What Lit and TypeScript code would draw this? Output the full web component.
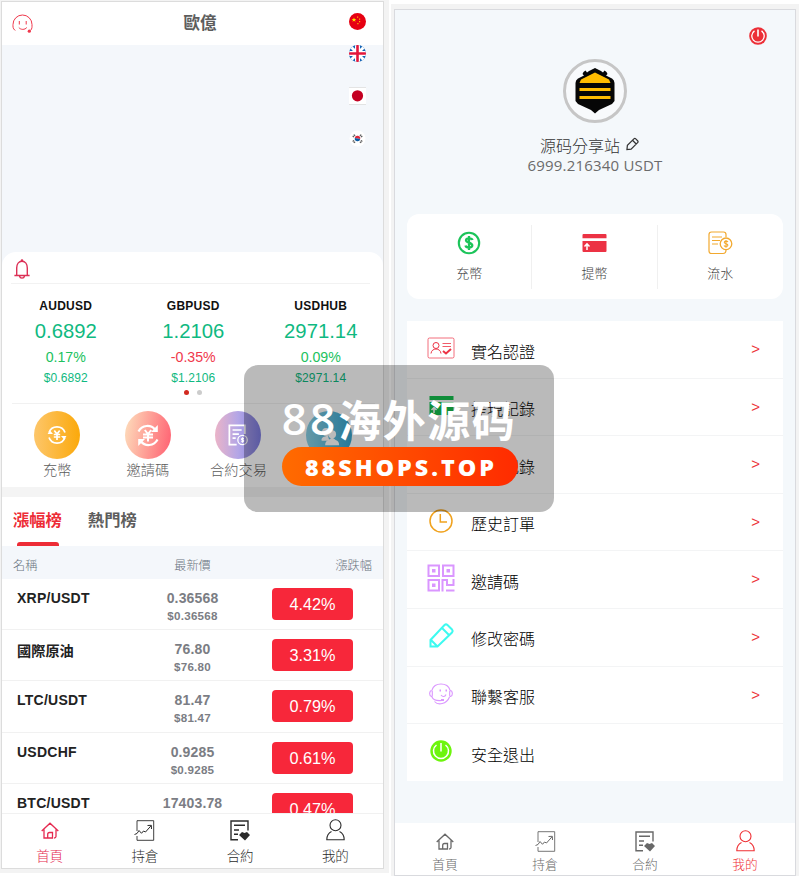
import { LitElement, html, svg, css, nothing } from "lit";
import { customElement, property } from "lit/decorators.js";
import { classMap } from "lit/directives/class-map.js";

const ic = (w: number, h: number, box: string, body: unknown) =>
  html`<svg width=${w} height=${h} viewBox=${box} fill="none" stroke="currentColor" stroke-width="1.3">${body}</svg>`;

const icons: Record<string, () => unknown> = {
  smile: () => ic(22, 20, "0 0 22 20", svg`
    <path d="M3.200 16.500C.5 14.500 1 12 1 10.500A9.500 9.500 0 0 1 20 10.500C20 13 20.300 14.500 18.500 16.500" stroke-width="1"/>
    <path d="M7.300 7v3.500M14.200 7v3.500M6.800 13.500c2 2.500 6 2.500 8 0" stroke-width="1"/>
    <circle cx="17.300" cy="17.200" r="1.600" fill="currentColor" stroke="none"/>`),
  bell: () => ic(16, 20, "0 0 16 20", svg`
    <path d="M2.700 16V9C2.700 5 4.800 2.200 8 2.200S13.300 5 13.300 9V16M.4 16.500H15.600M5.500 17.200C6 19.800 10 19.800 10.500 17.200" stroke-width="1.400"/>
    <circle cx="8" cy="1.500" r="1.300" fill="currentColor" stroke="none"/>`),
  home: () => ic(18, 17, "0 0 18 17", svg`
    <path d="M.7 9L9 1.200L17.300 9M3 7.500V16H11.500V10.500H8.500Q6.700 10.500 6.700 12.500V16M15 7.500V14.500Q15 16 13 16" stroke-width="1.300"/>`),
  chart: () => ic(21, 21, "0 0 21 21", svg`
    <path d="M3 11V.7H19.700V20.300H3V16" stroke-width=".9"/>
    <path d="M.5 14.500L3 13.500L5 10.500L7.500 13.300L9.500 11L11.500 12L17 5.800M13.500 5.500L17.300 5.300L17.500 9" stroke-width="1"/>`),
  contract: () => ic(20, 21, "0 0 20 21", svg`
    <path d="M8 19.700H1V1H18V10.500" stroke-width="1.400"/>
    <path d="M4 5.300H15M4 10H9M4 14.300H8" stroke-width="1.400"/>
    <path d="M9 15L12 12L14.500 13L17 12L20 15L15 20.500Z" fill="currentColor" stroke="none"/>`),
  user: () => ic(19, 22, "0 0 19 22", svg`
    <circle cx="9.500" cy="6.300" r="5.500" stroke-width="1.100"/>
    <path d="M5.500 12.500C2.500 14 .8 16.500.8 20.700H18.200C18.200 16.500 16.500 14 13.500 12.500" stroke-width="1.100"/>`),
  power: () => ic(22, 22, "0 0 22 22", svg`
    <circle cx="11" cy="11" r="10.700" fill="currentColor" stroke="none"/>
    <path d="M6.500 5A7.500 7.500 0 1 0 15.500 5M11 3V11.500" stroke="#fff" stroke-width="1.500"/>`),
  powerRed: () => ic(18, 18, "0 0 18 18", svg`
    <circle cx="9" cy="9" r="8.800" fill="currentColor" stroke="none"/>
    <path d="M5.500 3.900A6.200 6.200 0 1 0 12.500 3.900" stroke="#fff" stroke-width="1.300"/>
    <path d="M9 2.500V9.500" stroke="#fff" stroke-width="1.600"/>`),
  edit: () => ic(13, 14, "0 0 14 14", svg`
    <path d="M1 13L1.500 8.500L8.500 1.500Q9.500.5 10.500 1.500L12.500 3.500Q13.500 4.500 12.500 5.500L5.500 12.500ZM7 3L11 7" stroke-width="1.300"/>`),
  dollar: () => ic(24, 24, "0 0 24 24", svg`
    <circle cx="12" cy="12" r="10.200" stroke-width="2.100"/>
    <path d="M15.500 9C15 7 9 6.500 9 9.300C9 12 15.300 11.300 15.300 14.500C15.300 17.500 9 17 8.500 14.500M12 5V19" stroke-width="2.300"/>`),
  card: () => ic(25, 20, "0 0 25 20", svg`
    <path d="M.5 2Q.5 1 1.500 1H23.500Q24.500 1 24.500 2V5.300H.5ZM.5 8H24.500V18Q24.500 19 23.500 19H1.500Q.5 19 .5 18Z" fill="currentColor" stroke="none"/>
    <path d="M5 17V11.500M2.500 13.500L5 10.800L7.500 13.500" stroke="#fff" stroke-width="1.500"/>`),
  cardGreen: () => ic(25, 20, "0 0 25 20", svg`
    <path d="M.5 0H24.500V4H.5ZM.5 6H24.500V19H.5Z" fill="currentColor" stroke="none"/>
    <path d="M5 12V17M2.500 14L5 11.500L7.500 14" stroke="#fff" stroke-width="1.500"/>`),
  flow: () => ic(25, 24, "0 0 25 24", svg`
    <path d="M18 6V3.500Q18 1 15.500 1H3.500Q1 1 1 3.500V20Q1 22.500 3.500 22.500H15Q18 22.500 18 19M4 6H14M4 9.500H12M4 13H10" stroke-width="1.200"/>
    <circle cx="18" cy="12.800" r="5.800"/><path d="M20 11C19 9.500 16 10 16.300 11.500C16.500 13 20 12.400 19.900 14.200C19.700 16 16.500 15.500 16 14.500M18 9V16.800" stroke-width="1.100"/>`),
  idcard: () => ic(28, 22, "0 0 28 22", svg`
    <rect x="1" y="1" width="26" height="20" rx="1.500" stroke-width="1" opacity=".7"/>
    <circle cx="9" cy="8.500" r="3" stroke-width="1"/><path d="M4 16.500C4.500 10.500 13.500 10.500 14 16.500" stroke-width="1"/>
    <path d="M15.500 6.500H24M15.500 9.500H24" stroke-width=".8"/><path d="M16 14L19 16.500L24 12" stroke-width="2"/>`),
  clock: () => ic(24, 24, "0 0 24 24", svg`<circle cx="12" cy="12" r="11" stroke-width="1.500"/><path d="M11.300 5V13H18" stroke-width="1.500"/>`),
  qr: () => ic(28, 28, "0 0 28 28", svg`
    <path d="M1.500 1.500H12V12H1.500ZM16 1.500H26.500V12H16ZM1.500 16H12V26.500H1.500ZM15.500 27.500V16H20V21H26.500V15M19 26.500H27.500" stroke-width="2"/>
    <path d="M5 5H8.500V8.500H5ZM19.500 5H23V8.500H19.500ZM5 19.500H8.500V23H5Z" fill="currentColor" stroke="none"/>`),
  pencil: () => ic(25, 25, "0 0 25 25", svg`
    <path d="M1.500 23.500V17L15.500 2Q17 .8 18.500 2L23 6.500Q24.200 8 23 9.500L8.500 23.500ZM13 5L20 12M2 17L8 23" stroke-width="2"/>`),
  agent: () => ic(24, 22, "0 0 24 22", svg`
    <path d="M3 7C5.500-1 18.500-1 21 7M3 7.500C0 7.500 0 13 2.500 13.500C3.300 14 3.500 12 3.200 7.500M21 7.500C24 7.500 24 13 21.500 13.500C20.500 14 20.600 11 20.800 7.500M3 14C4 16.500 8 18 13 17.500M20.500 14C17.500 21.500 9 22.500 5.500 18.500M12 12C13.500 14 16 14 17 11.500" stroke-width="1.100"/>
    <path d="M10.500 7.500h1.500M16.500 7.500H18M12 17h3" stroke-width="2"/>`),
};

const circles: Record<string, () => unknown> = {
  coin: () => ic(20, 20, "0 0 20 20", svg`
    <path d="M2 7.500A8.500 8.500 0 0 1 18 7.500M18 12.500A8.500 8.500 0 0 1 2 12.500" stroke-width="1.700"/>
    <path d="M.5 9H6L3 5.500ZM19.500 11H14L17 14.500Z" fill="currentColor" stroke="none"/>
    <path d="M7.300 5.500L10 9L12.700 5.500M6.800 9.500H13.200M6.800 12H13.200M10 9V15" stroke-width="1.700"/>`),
  cycle: () => ic(22, 23, "0 0 22 23", svg`
    <path d="M1.500 7.500C5 .5 14 .5 18 5.500M20.500 15.500C17 22.500 8 22.500 4 17.500" stroke-width="2.200"/>
    <path d="M20.800 1V8H14ZM1.200 22V15H8Z" fill="currentColor" stroke="none"/>
    <path d="M7.800 6L11 10L14.200 6M6 10.500H16M6 13.500H16M11 10V17.500" stroke-width="2"/>`),
  bill: () => ic(20, 22, "0 0 22 24", svg`
    <path d="M9.500 22.500H1.500V1.500H18.500V11M5 6.500H15M5 11H12M5 15.500H8.500" stroke-width="1.900"/>
    <circle cx="16" cy="17.500" r="5.200" stroke-width="1.400"/><path d="M17.500 15.800H14.800V17.500H17.300V19.300H14.500M16 14.500V20.500" stroke-width="1.100"/>`),
  team: () => ic(21, 21, "0 0 24 24", svg`
    <g fill="currentColor" stroke="none"><circle cx="8" cy="8" r="4.500"/><path d="M3 18Q2 14 7 13L10 12L12 18Z"/>
    <circle cx="15" cy="10.500" r="4.500"/><path d="M7 23Q7 18 11 17L15 14L19 17Q23 18 23 23Z"/></g>`),
};

@customElement("tab-bar")
class TabBar extends LitElement {
  @property() active = "home";
  static styles = css`
    :host { display: flex; justify-content: space-around; background: #fff; color: #2b2b2b; font-size: var(--tab-size, 13.500px); font-weight: 300; }
    :host([muted]) { color: #686868; }
    .tab { flex: 1; display: flex; flex-direction: column; align-items: center; }
    .icon { height: 24px; display: flex; align-items: center; margin-top: var(--tab-top, 4px); }
    .label { line-height: 20px; margin-top: var(--tab-gap, 5px); }
    .on { color: var(--tab-on, #e52a50); }
  `;
  render() {
    const tabs = [["home", "首頁"], ["chart", "持倉"], ["contract", "合約"], ["user", "我的"]];
    return tabs.map(([k, t]) => html`<div class=${classMap({ tab: true, on: k === this.active })}>
      <div class="icon">${icons[k]()}</div><div class="label">${t}</div></div>`);
  }
}

@customElement("home-screen")
class HomeScreen extends LitElement {
  static styles = css`
    :host { display: flex; flex-direction: column; box-sizing: border-box; width: 383px; height: 868px; border: 1px solid #dcdcdc; background: #f4f7fb; overflow: hidden; font-family: "Liberation Sans", "Noto Sans CJK TC", sans-serif; }
    .top { height: 43px; background: #fff; display: flex; align-items: center; flex: none; position: relative; }
    .smile { color: #f0384c; margin-left: 10px; height: 20px; width: 60px; }
    .title { flex: 1; text-align: center; margin-right: 55px; padding-bottom: 3px; font-size: 16.500px; font-weight: 700; color: #5d5d5d; }
    .flags { position: absolute; left: 347px; top: 11px; display: flex; flex-direction: column; }
    .flags svg { display: block; }
    .hero { height: 207px; flex: none; }
    .sheet { background: #fff; border-radius: 14px 14px 0 0; height: 235px; flex: none; }
    .notice { height: 32px; margin: 0 13px 0 9px; border-bottom: 1px solid #f2f2f2; color: #dc3056; padding: 7px 0 0 3px; box-sizing: border-box; }
    .tickers { display: grid; grid-template-columns: repeat(3, 127.500px); text-align: center; padding-top: 12px; color: #0fb981; }
    .sym { font: 700 12px/20px "Liberation Sans"; color: #111; letter-spacing: .25px; }
    .px { font-size: 20.300px; line-height: 31px; }
    .pct { font-size: 14.200px; line-height: 21px; color: #21c25e; }
    .down { color: #f0384c; }
    .usd { font-size: 12px; line-height: 21px; letter-spacing: .1px; }
    .dots { display: flex; justify-content: center; gap: 8px; margin-top: 1px; }
    .dot { width: 5px; height: 5px; border-radius: 50%; background: #ccc; }
    .dot.cur { background: #d22a20; }
    .quick { border-top: 1px solid #f1f1f1; margin: 8px 8px 0 10px; padding-top: 7px; display: grid; grid-template-columns: repeat(4, 90.600px); }
    .q { display: flex; flex-direction: column; align-items: center; }
    .disc { width: 46px; height: 48px; border-radius: 50%; display: flex; align-items: center; justify-content: center; color: #fff; }
    .coin { background: linear-gradient(90deg, #fdc66a, #fba90b); }
    .cycle { background: linear-gradient(100deg, #fde0bd, #ff5e70); }
    .bill { background: linear-gradient(90deg, #ebb4c8, #b3a6e6 50%, #7c7be0); }
    .team { background: linear-gradient(90deg, #8cd2e6, #35a6d0); }
    .q span { font-size: 14.200px; line-height: 22px; color: #5c5c5c; font-weight: 300; }
    .tabs { background: #fff; border-top: 10px solid #f4f4f4; height: 49px; flex: none; display: flex; padding-left: 11px; gap: 26px; font-size: 16.300px; font-weight: 700; line-height: 47px; color: #5d5d5d; }
    .tabs .on { color: #ed2c36; position: relative; }
    .on i { position: absolute; left: 4px; bottom: 0; width: 42px; height: 4px; border-radius: 3px 3px 0 0; background: #ed2c36; }
    .cols { display: grid; grid-template-columns: 1fr 1fr 1fr; height: 33px; line-height: 41px; padding: 0 11px 0 11px; font-size: 12.200px; color: #6b7580; font-weight: 300; flex: none; }
    .cols :nth-child(2) { text-align: center; } .cols :nth-child(3) { text-align: right; }
    .list { flex: none; height: 234px; overflow: hidden; background: #fff; }
    .row { height: 51.200px; box-sizing: border-box; border-bottom: 1px solid #f1f1f1; display: grid; grid-template-columns: 127px 127px 112px; }
    .name { font-size: 14px; font-weight: 700; color: #222; padding-left: 15px; line-height: 38px; letter-spacing: .25px; }
    .cjk { line-height: 43px; letter-spacing: 0; font-size: 14.200px; }
    .mid { text-align: center; font-weight: 700; color: #7b7d84; }
    .mid b { display: block; font-size: 14px; line-height: 18px; margin-top: 10px; letter-spacing: .15px; }
    .mid small { display: block; font-size: 11.600px; line-height: 18px; letter-spacing: .25px; }
    .chg { justify-self: end; width: 81px; height: 32px; margin: 9px 15px 0 0; border-radius: 4px; background: #f7273a; color: #fff; text-align: center; font-size: 16.300px; line-height: 32px; }
    tab-bar { height: 54px; flex: none; border-top: 1px solid #f1f1f1; }
  `;
  render() {
    const tick = [["AUDUSD", "0.6892", "0.17%"], ["GBPUSD", "1.2106", "-0.35%"], ["USDHUB", "2971.14", "0.09%"]];
    const quick = [["coin", "充幣"], ["cycle", "邀請碼"], ["bill", "合約交易"], ["team", ""]];
    const rows = [["XRP/USDT", "0.36568", "4.42%"], ["國際原油", "76.80", "3.31%"], ["LTC/USDT", "81.47", "0.79%"], ["USDCHF", "0.9285", "0.61%"], ["BTC/USDT", "17403.78", "0.47%"]];
    return html`
      <div class="top"><div class="smile">${icons.smile()}</div><div class="title">歐億</div>
        <div class="flags"><svg width="17" height="135" viewBox="0 0 17 135">
          <circle cx="8.500" cy="8.500" r="8.500" fill="#e60012"/>
          <path d="M5 4.500l.6 1.600h1.800l-1.400 1 .5 1.700L5 7.800l-1.500 1 .5-1.700-1.400-1h1.800z" fill="#ffe100"/>
          <path d="M8 3.500h1.200v1.200H8zM10 5.500h1.200v1.200H10zM10 8h1.200v1.200H10zM8.300 10h1.200v1.200H8.300z" fill="#ffb000"/>
          <clipPath id="uk"><circle cx="8.500" cy="40.500" r="8.500"/></clipPath>
          <g clip-path="url(#uk)"><path d="M0 31h17v19H0z" fill="#1263b5"/>
            <path d="M0 32l17 17M17 32L0 49" stroke="#fff" stroke-width="3"/>
            <path d="M8.500 31v19M0 40.500h17" stroke="#fff" stroke-width="5"/><path d="M8.500 31v19M0 40.500h17" stroke="#e3173b" stroke-width="2.600"/></g>
          <path d="M0 74h17v17H0z" fill="#fff"/><path d="M0 74.500h17M0 91.500h17" stroke="#ddd" stroke-width=".8"/><circle cx="8.500" cy="82.800" r="5.600" fill="#c40022"/>
          <circle cx="8.500" cy="125.500" r="8" fill="#fff"/>
          <path d="M5.800 125a2.700 2.700 0 0 1 5.400 1z" fill="#df273b"/><path d="M5.800 125a2.700 2.700 0 0 0 5.400 1z" fill="#0b5ba2"/>
          <path d="M4 124l2-2.500M13 124l-2-2.500M4 127.500l2 2.500M13 127.500l-2 2.500" stroke="#555" stroke-width="1.800" stroke-dasharray="1.200 .5"/>
        </svg></div></div>
      <div class="hero"></div>
      <div class="sheet">
        <div class="notice">${icons.bell()}</div>
        <div class="tickers">${tick.map(([s, p, c]) => html`<div><div class="sym">${s}</div><div class="px">${p}</div>
          <div class=${classMap({ pct: true, down: c[0] === "-" })}>${c}</div><div class="usd">$${p}</div></div>`)}</div>
        <div class="dots"><div class="dot cur"></div><div class="dot"></div></div>
        <div class="quick">${quick.map(([k, t]) => html`<div class="q"><div class="disc ${k}">${circles[k]()}</div><span>${t}</span></div>`)}</div>
      </div>
      <div class="tabs"><div class="on">漲幅榜<i></i></div><div>熱門榜</div></div>
      <div class="cols"><span>名稱</span><span>最新價</span><span>漲跌幅</span></div>
      <div class="list">${rows.map(([n, p, c], i) => html`<div class="row"><div class=${classMap({ name: true, cjk: n === "國際原油" })}>${n}</div>
        <div class="mid"><b>${p}</b>${i < 4 ? html`<small>$${p}</small>` : nothing}</div><div class="chg">${c}</div></div>`)}</div>
      <tab-bar active="home"></tab-bar>`;
  }
}

@customElement("profile-screen")
class ProfileScreen extends LitElement {
  static styles = css`
    :host { display: flex; flex-direction: column; box-sizing: border-box; width: 402px; height: 867px; border: 1px solid #d9dade; background: #f4f8fb; font-family: "Noto Sans CJK TC", sans-serif; }
    .head { height: 204px; flex: none; display: flex; flex-direction: column; align-items: center; }
    .power { align-self: flex-end; height: 18px; margin: 17px 28px 0 0; color: #ec2f37; }
    .avatar { width: 64px; height: 64px; margin-top: 14px; }
    .avatar svg, .power svg { display: block; }
    .name { display: flex; align-items: center; gap: 6px; margin: 12px 11px 0 0; height: 20px; line-height: 20px; font-size: 16px; font-weight: 300; color: #333; }
    .name svg { margin-top: -3px; }
    .bal { font: 15px/20px "Open Sans", "Noto Sans", sans-serif; color: #6b6b6b; letter-spacing: .2px; }
    .card { height: 85px; margin: 0 12px; border-radius: 12px; background: #fff; display: grid; grid-template-columns: repeat(3, 1fr); align-items: center; flex: none; }
    .act { height: 64px; border-right: 1px solid #f0f0f0; display: flex; flex-direction: column; align-items: center; }
    .act:last-child { border: 0; }
    .act .i { height: 26px; display: flex; align-items: center; margin-top: 5px; }
    .act span { font-size: 13px; line-height: 18px; margin-top: 8px; color: #444; font-weight: 300; }
    .green { color: #1cc45a; } .red { color: #ec3244; } .amber { color: #f2a92f; }
    .menu { margin: 22px 12px 0; background: #fff; height: 460px; flex: none; }
    .row { box-sizing: border-box; height: 57.600px; border-bottom: 1px solid #f3f4f5; display: flex; align-items: flex-start; }
    .row:last-child { border: 0; }
    .icon { width: 28px; height: 30px; margin: 12px 16px 0 20px; display: flex; align-items: center; justify-content: center; }
    .label { flex: 1; font-size: 16px; line-height: 24px; margin-top: 17.500px; color: #000; font-weight: 300; }
    .go { font: 15px/20px "Liberation Sans"; color: #ed3338; margin: 18px 23px 0 0; }
    tab-bar { margin-top: auto; height: 52px; --tab-top: 6px; --tab-gap: 1px; --tab-size: 12.700px; --tab-on: #ef2f33; }
  `;
  render() {
    const acts = [["dollar", "充幣", "green"], ["card", "提幣", "red"], ["flow", "流水", "amber"]];
    const menu = [["idcard", "實名認證", "#ec3244"], ["cardGreen", "提現記錄", "#15c24f"], ["", "充值記錄", "#000"], ["clock", "歷史訂單", "#f0a21e"],
      ["qr", "邀請碼", "#da96ff"], ["pencil", "修改密碼", "#3dfaf0"], ["agent", "聯繫客服", "#da96ff"], ["power", "安全退出", "#6df50d"]];
    return html`
      <div class="head"><div class="power">${icons.powerRed()}</div>
        <div class="avatar"><svg width="64" height="64" viewBox="0 0 64 64">
          <circle cx="32" cy="32" r="30.500" fill="#f8fafc" stroke="#c6c6c6" stroke-width="3"/>
          <path d="M32 9L38 12L40 13.500L41.500 11.500L43.500 13L44.500 15L43 16.500L49 19.500Q51.500 21 51.500 24V42L49 45L36 51L32 54.500L28 51L15 45L12.500 42V24Q12.500 21 15 19.500L21 16.500L19.500 15L20.500 13L22.500 11.500L24 13.500L26 12Z" fill="#060606"/>
          <path d="M32 13.500L46 20.500L47.500 24H16.500L18 20.500ZM16.500 29H47.500V32H16.500ZM16.500 37H47.500V40H16.500Z" fill="#ffbc00"/></svg></div>
        <div class="name">源码分享站${icons.edit()}</div><div class="bal">6999.216340 USDT</div></div>
      <div class="card">${acts.map(([k, t, c]) => html`<div class="act"><div class="i ${c}">${icons[k]()}</div><span>${t}</span></div>`)}</div>
      <div class="menu">${menu.map(([k, t, c], i) => html`<div class="row"><div class="icon" style="color:${c}">${k ? icons[k]() : nothing}</div>
        <div class="label">${t}</div>${i < 7 ? html`<div class="go">&gt;</div>` : nothing}</div>`)}</div>
      <tab-bar muted active="user"></tab-bar>`;
  }
}

@customElement("app-root")
class AppRoot extends LitElement {
  static styles = css`
    :host { display: flex; position: relative; width: 800px; height: 876px; overflow: hidden; background: #fff; }
    .left { box-sizing: border-box; width: 389px; height: 873px; padding: 1px 0 0 1px; background: #f3f3f3; }
    .right { box-sizing: border-box; width: 408px; height: 872px; margin: 4px 0 0 2px; padding: 5px 0 0 3px; background: #f3f3f3; }
    .mark { position: absolute; left: 244px; top: 365px; width: 310px; height: 147px; border-radius: 14px; background: rgba(0, 0, 0, .27); display: flex; flex-direction: column; align-items: center; color: #fff; }
    .big { display: flex; align-items: center; height: 54px; margin-top: 26px; font-family: "Noto Sans CJK SC", sans-serif; font-weight: 700; font-size: 43px; line-height: 50px; letter-spacing: 1.500px; white-space: nowrap; }
    .big b { font: 600 44px/50px "Open Sans", sans-serif; letter-spacing: 3px; }
    .pill { width: 236px; height: 39px; margin: 2px 0 0 2px; border-radius: 20px; background: linear-gradient(90deg, #ff6b00, #ff2b00); text-align: center; font: 800 23.300px/40px "Open Sans", sans-serif; letter-spacing: 3px; text-indent: 2px; }
  `;
  render() {
    return html`<div class="left"><home-screen></home-screen></div><div class="right"><profile-screen></profile-screen></div>
      <div class="mark"><div class="big"><b>88</b>海外源码</div><div class="pill">88SHOPS.TOP</div></div>`;
  }
}
